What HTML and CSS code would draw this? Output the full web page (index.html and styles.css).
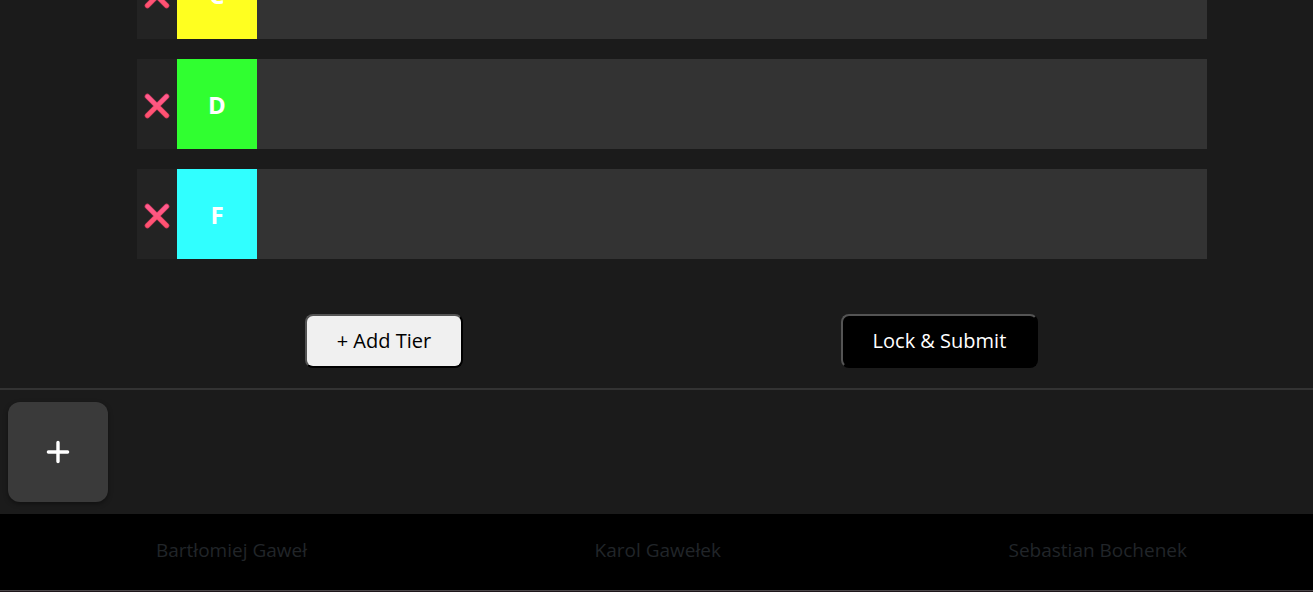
FILE: index.html
```html
<!DOCTYPE html>
<html lang="en">
<head>
<meta charset="utf-8">
<title>Tier list</title>
<link rel="stylesheet" href="styles.css">
</head>
<body>
<svg class="symbols" aria-hidden="true">
  <defs>
    <linearGradient id="cross-fill" gradientUnits="userSpaceOnUse" x1="0" y1="0" x2="0" y2="26">
      <stop offset="0" stop-color="#ff5c93"/>
      <stop offset="1" stop-color="#ff5069"/>
    </linearGradient>
  </defs>
  <symbol id="cross" viewBox="0 0 26 26">
    <path d="M3.4 3.4 22.6 22.6M22.6 3.4 3.4 22.6" fill="none" stroke="#d63c60" stroke-width="5.4" stroke-linecap="round"/>
    <path d="M3.5 3.5 22.5 22.5M22.5 3.5 3.5 22.5" fill="none" stroke="url(#cross-fill)" stroke-width="4" stroke-linecap="round"/>
  </symbol>
</svg>
<div class="page">
  <main class="board">
    <section class="tier">
      <button class="tier-remove" type="button" aria-label="Remove tier C"><svg class="cross"><use href="#cross"/></svg></button>
      <div class="tier-label tier-c">C</div>
      <div class="tier-items"></div>
    </section>
    <section class="tier">
      <button class="tier-remove" type="button" aria-label="Remove tier D"><svg class="cross"><use href="#cross"/></svg></button>
      <div class="tier-label tier-d">D</div>
      <div class="tier-items"></div>
    </section>
    <section class="tier">
      <button class="tier-remove" type="button" aria-label="Remove tier F"><svg class="cross"><use href="#cross"/></svg></button>
      <div class="tier-label tier-f">F</div>
      <div class="tier-items"></div>
    </section>
  </main>
  <div class="actions">
    <button class="action action-add" type="button">+ Add Tier</button>
    <button class="action action-submit" type="button">Lock &amp; Submit</button>
  </div>
  <section class="pool">
    <button class="pool-add" type="button" aria-label="Add item">
      <svg class="plus" viewBox="0 0 24 24"><path d="M12 2.4V21.6M2.4 12H21.6" fill="none" stroke="#fff" stroke-width="3.4" stroke-linecap="round"/></svg>
    </button>
  </section>
  <footer class="footer">
    <span>Bartłomiej Gaweł</span>
    <span>Karol Gawełek</span>
    <span>Sebastian Bochenek</span>
  </footer>
</div>
</body>
</html>
```
FILE: styles.css
```css
* {
  box-sizing: border-box;
}

body {
  margin: 0;
  background: #1b1b1b;
  color: #fff;
  font-family: "Segoe UI", "Open Sans", "Noto Sans", sans-serif;
  font-size: 19px;
  line-height: 30px;
}

.symbols {
  position: absolute;
  width: 0;
  height: 0;
}

/* The view rests at the end of the list, older tiers run off the top. */
.page {
  display: flex;
  flex-direction: column;
  justify-content: flex-end;
  height: 100vh;
  overflow: hidden;
}

.page > * {
  flex-shrink: 0;
}

.board {
  display: flex;
  flex-direction: column;
  gap: 20px;
  padding: 0 106px 0 137px;
}

.tier {
  display: flex;
  min-height: 90px;
  background: #333;
}

.tier-remove {
  display: flex;
  align-items: center;
  justify-content: center;
  width: 40px;
  padding: 3px 1px 0 0;
  border: 0;
  background: #232323;
}

.cross {
  width: 26px;
  height: 26px;
}

.tier-label {
  display: flex;
  align-items: center;
  justify-content: center;
  width: 80px;
  padding-top: 2px;
  font-size: 24px;
  font-weight: 700;
}

.tier-c { background: #ffff20; }
.tier-d { background: #30ff30; }
.tier-f { background: #30ffff; }

.tier-items {
  flex: 1;
}

.actions {
  display: flex;
  justify-content: space-around;
  padding: 55px 86px 20px 116px;
}

.action {
  padding: 10px 30px;
  border: 2px outset #000;
  border-radius: 8px;
  font: inherit;
  font-size: 20px;
}

.action-add {
  background: #f0f0f0;
  color: #000;
}

.action-submit {
  background: #000;
  color: #fff;
}

.pool {
  display: flex;
  padding: 12px 8px;
  border-top: 2px solid #333;
}

.pool-add {
  display: flex;
  align-items: center;
  justify-content: center;
  width: 100px;
  height: 100px;
  padding: 0;
  border: 0;
  border-radius: 12px;
  background: #3a3a3a;
  box-shadow: 0 2px 5px rgba(0, 0, 0, 0.4);
}

.plus {
  width: 24px;
  height: 24px;
}

.footer {
  display: flex;
  justify-content: space-between;
  padding: 21px 126px 25px 156px;
  border-bottom: 1px solid #4a4648;
  box-shadow: 0 1px #1e161a;
  margin-bottom: 1px;
  background: #000;
  color: #212529;
}
```
